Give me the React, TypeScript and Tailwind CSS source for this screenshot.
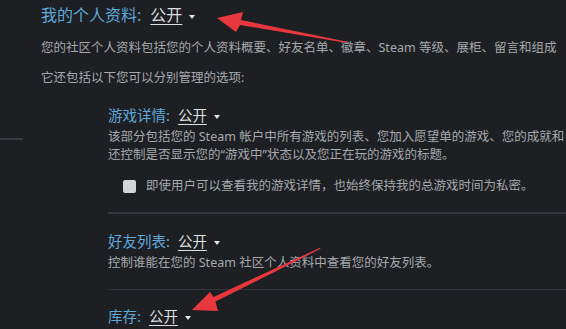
import React from 'react'

const font = { fontFamily: '"Noto Sans", "Noto Sans CJK SC", sans-serif' }

function Setting({ label, size = 'sub' }: { label: string; size?: 'main' | 'sub' }) {
  const big = size === 'main'
  return (
    <div
      className={`flex items-center whitespace-nowrap ${big ? 'h-[22px] text-[16px]' : 'h-[20px] text-[14.5px]'}`}
    >
      <span className="text-[#5fa9da]">{label}:</span>
      <span className={`text-[#dcdedf] underline underline-offset-[3px] ${big ? 'ml-[9px]' : 'ml-[8px]'}`}>公开</span>
      <span className="ml-[7px] mt-[3px] w-0 h-0 border-l-[3.5px] border-r-[3.5px] border-t-[4px] border-l-transparent border-r-transparent border-t-[#e8e8e8]" />
    </div>
  )
}

export default function App() {
  return (
    <div style={font} className="relative w-[566px] h-[329px] overflow-hidden bg-[#1d1f23] flex">
      {/* sidebar edge */}
      <div className="w-[41px] shrink-0 pt-[138px]">
        <div className="w-[23px] h-[2px] bg-[#383b40]" />
      </div>

      <div className="flex-1 min-w-0 pt-[4px] text-[12.5px] leading-[18px] text-[#a5a9ad] whitespace-nowrap">
        <Setting label="我的个人资料" size="main" />
        <p className="mt-[13px]">
          您的社区个人资料包括您的个人资料概要、好友名单、徽章、Steam 等级、展柜、留言和组成
        </p>
        <p className="mt-[12px]">它还包括以下您可以分别管理的选项:</p>

        <div className="pl-[67px] mt-[18px]">
          <Setting label="游戏详情" />
          <div className="mt-[3px]">
            <p>该部分包括您的 Steam 帐户中所有游戏的列表、您加入愿望单的游戏、您的成就和</p>
            <p>还控制是否显示您的“游戏中”状态以及您正在玩的游戏的标题。</p>
          </div>
          <div className="mt-[13px] pl-[15px] flex items-center h-[18px]">
            <span className="w-[13px] h-[13px] rounded-[2px] bg-[#d4d5d6]" />
            <span className="ml-[10px]">即使用户可以查看我的游戏详情，也始终保持我的总游戏时间为私密。</span>
          </div>

          <div className="mt-[17px] h-[2px] bg-[#33363b]" />

          <div className="mt-[17px]">
            <Setting label="好友列表" />
          </div>
          <p className="mt-[3px]">控制谁能在您的 Steam 社区个人资料中查看您的好友列表。</p>

          <div className="mt-[17px] h-px bg-[#303338]" />

          <div className="mt-[16px]">
            <Setting label="库存" />
          </div>
        </div>
      </div>

      {/* annotation arrows */}
      <svg className="absolute inset-0 pointer-events-none" width="566" height="329" viewBox="0 0 566 329">
        <polygon
          fill="#e8383d"
          points="217,18 243,12 241,20 346,41.5 345.5,42.8 240,25 236,32"
        />
        <polygon
          fill="#e8383d"
          points="192,310 210,292 213.5,297 320,247.7 320.5,248.8 215.5,301.5 218,311"
        />
      </svg>
    </div>
  )
}
